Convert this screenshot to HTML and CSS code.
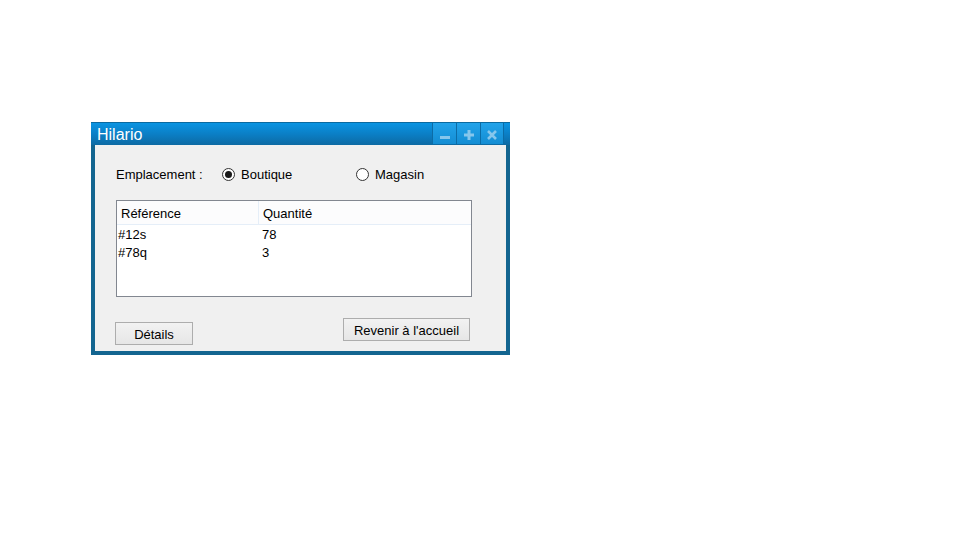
FILE: index.html
```html
<!DOCTYPE html>
<html>
<head>
<meta charset="utf-8">
<link rel="stylesheet" href="styles.css">
</head>
<body>
<div class="window">
  <div class="titlebar">
    <span class="title">Hilario</span>
    <div class="tbtns">
      <div class="tbtn"><svg width="10" height="10" viewBox="0 0 10 10"><rect x="0" y="6" width="10" height="3" fill="#86c6ec"/></svg></div>
      <div class="tbtn"><svg width="10" height="10" viewBox="0 0 10 10"><path d="M3.5 0h3v3.5H10v3H6.5V10h-3V6.5H0v-3h3.5z" fill="#86c6ec"/></svg></div>
      <div class="tbtn"><svg width="10" height="10" viewBox="0 0 10 10"><path d="M1 1L9 9M9 1L1 9" stroke="#86c6ec" stroke-width="2.6"/></svg></div>
    </div>
  </div>
  <div class="content">
    <div class="radiorow">
      <span class="lbl">Emplacement :</span>
      <label class="radio r1"><span class="circle checked"></span>Boutique</label>
      <label class="radio r2"><span class="circle"></span>Magasin</label>
    </div>
    <div class="listbox">
      <div class="lhead">
        <div class="hc c1">Référence</div>
        <div class="hc c2">Quantité</div>
      </div>
      <div class="lrow"><span class="d1">#12s</span><span class="d2">78</span></div>
      <div class="lrow"><span class="d1">#78q</span><span class="d2">3</span></div>
    </div>
    <div class="btnrow">
      <button class="btn details">Détails</button>
      <button class="btn back">Revenir à l'accueil</button>
    </div>
  </div>
</div>
</body>
</html>
```

FILE: styles.css
```css
html, body {
  margin: 0;
  padding: 0;
  background: #ffffff;
}
body {
  padding: 122px 0 0 91px;
  font-family: "Liberation Sans", Arial, sans-serif;
  font-size: 13px;
  color: #000;
}
.window {
  width: 419px;
  box-sizing: border-box;
  background: #136590;
  padding: 0 4px 4px 4px;
}
.titlebar {
  height: 23px;
  margin: 0 -4px;
  padding: 0 0 0 6px;
  display: flex;
  align-items: flex-start;
  justify-content: space-between;
  background: linear-gradient(#0a94e2, #0b7fc6 50%, #0d6aa3);
  border-top: 1px solid #0b6aa0;
  box-sizing: border-box;
}
.title {
  color: #ffffff;
  font-size: 16px;
  line-height: 24px;
}
.tbtns {
  display: flex;
  margin-right: 6px;
  height: 21px;
}
.tbtn {
  width: 24px;
  height: 21px;
  box-sizing: border-box;
  display: flex;
  align-items: center;
  justify-content: center;
  background: linear-gradient(#22a3ea, #148dd3);
  border-left: 1px solid #0c6ca6;
}
.tbtn:last-child {
  border-right: 1px solid #0c6ca6;
}
.tbtn svg { margin-top: 2px; }
.content {
  background: #f0f0f0;
  height: 206px;
  box-sizing: border-box;
  padding: 22px 0 0 21px;
  display: flex;
  flex-direction: column;
}
.radiorow {
  display: flex;
  align-items: center;
  height: 15px;
  line-height: 15px;
}
.lbl { width: 106px; }
.radio {
  display: flex;
  align-items: center;
}
.r1 { width: 134px; }
.circle {
  width: 13px;
  height: 13px;
  box-sizing: border-box;
  border: 1px solid #333;
  border-radius: 50%;
  background: #fff;
  margin-right: 6px;
  display: flex;
  align-items: center;
  justify-content: center;
}
.circle.checked::after {
  content: "";
  width: 7px;
  height: 7px;
  border-radius: 50%;
  background: #1a1a1a;
}
.listbox {
  margin-top: 18px;
  width: 356px;
  height: 97px;
  box-sizing: border-box;
  border: 1px solid #828790;
  background: #fff;
}
.lhead {
  display: flex;
  height: 24px;
  background: #fcfcfd;
  border-bottom: 1px solid #e5eef8;
  box-sizing: border-box;
}
.hc {
  line-height: 25px;
  box-sizing: border-box;
}
.c1 {
  width: 142px;
  padding-left: 4px;
  border-right: 1px solid #e5eef8;
}
.c2 { padding-left: 4px; }
.lrow {
  display: flex;
  height: 18px;
  line-height: 18px;
}
.lrow:nth-child(2) { margin-top: 1px; }
.d1 { width: 144px; padding-left: 1px; }
.btnrow {
  display: flex;
  align-items: flex-start;
  margin-top: 21px;
}
.btn {
  font-family: "Liberation Sans", Arial, sans-serif;
  font-size: 13px;
  color: #000;
  height: 23px;
  padding: 1px 0 0 0;
  border: 1px solid #adadad;
  background: linear-gradient(#f2f2f2, #e6e6e6);
  box-sizing: border-box;
}
.details {
  width: 78px;
  margin-top: 4px;
  margin-left: -1px;
}
.back {
  width: 127px;
  margin-left: 150px;
}
```
